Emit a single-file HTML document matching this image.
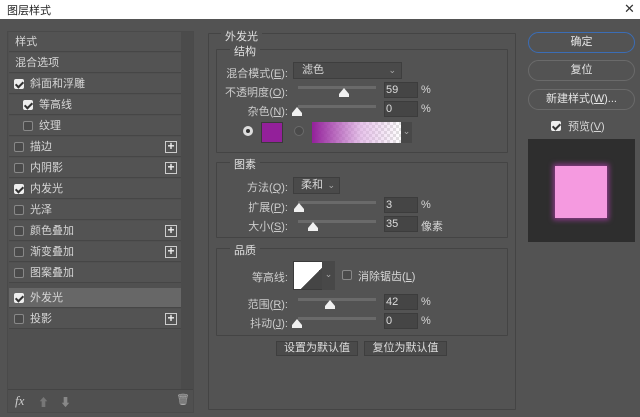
<!DOCTYPE html>
<html><head><meta charset="utf-8"><style>
*{box-sizing:border-box;margin:0;padding:0}
body{width:640px;height:417px;background:#535353;position:relative;overflow:hidden;font-family:"Liberation Sans","Noto Sans CJK SC",sans-serif;font-size:11px;color:#d6d6d6}
.a{position:absolute}
.title{left:0;top:0;width:640px;height:19px;background:#fff;color:#222;font-size:11px}
.lp{left:7px;top:31px;width:187px;height:382px;border:1px solid #4a4a4a;background:#505050}
.row{position:absolute;left:1px;width:172px;height:20px;border-bottom:1px solid #464646;background:#535353;line-height:20px}
.cb{position:absolute;width:10px;height:10px;border:1px solid #888;border-radius:2px;background:#4a4a4a}
.cb.on{background:#eee;border-color:#eee}
.cb.on::after{content:"";position:absolute;left:2px;top:0px;width:3px;height:6px;border:solid #333;border-width:0 2px 2px 0;transform:rotate(45deg)}
.plus{position:absolute;right:4px;top:4px;width:12px;height:12px;border:1px solid #ccc;color:#eee;font-size:12px;line-height:9px;text-align:center;font-weight:bold}
.box{border:1px solid #444;border-radius:1px}
.leg{position:absolute;background:#535353;padding:0 4px;color:#e0e0e0}
.lbl{position:absolute;text-align:right;width:110px;color:#ccc}
.slider{position:absolute;height:3px;background:#6a6a6a;width:78px}
.thumb{position:absolute;width:0;height:0;border-left:5px solid transparent;border-right:5px solid transparent;border-bottom:6px solid #f0f0f0}
.thumb::after{content:"";position:absolute;left:-5px;top:6px;width:10px;height:3px;background:#f0f0f0}
.inp{position:absolute;width:34px;height:16px;background:#454545;border:1px solid #3c3c3c;padding-left:1px;line-height:14px;color:#ddd}
.btn{position:absolute;border:1px solid #6a6a6a;border-radius:11px;text-align:center;color:#e6e6e6;line-height:19px;height:21px}
.sb{position:absolute;height:15px;background:#4a4a4a;border:1px solid #3e3e3e;text-align:center;line-height:13px;color:#ddd}
</style></head><body>
<div class="a title"><span class="a" style="left:7px;top:2px">图层样式</span><span class="a" style="left:624px;top:1px;font-size:13px;color:#333">✕</span></div>

<div class="a lp">
<div class="a" style="left:173px;top:0;width:12px;height:357px;background:#4b4b4b"></div>
<div class="row" style="top:0">&nbsp;&nbsp;样式</div>
<div class="row" style="top:21px">&nbsp;&nbsp;混合选项</div>
<div class="row" style="top:42px"><span class="cb on" style="left:5px;top:5px"></span><span style="margin-left:21px">斜面和浮雕</span></div>
<div class="row" style="top:63px"><span class="cb on" style="left:14px;top:5px"></span><span style="margin-left:30px">等高线</span></div>
<div class="row" style="top:84px"><span class="cb" style="left:14px;top:5px"></span><span style="margin-left:30px">纹理</span></div>
<div class="row" style="top:105px"><span class="cb" style="left:5px;top:5px"></span><span style="margin-left:21px">描边</span><span class="plus">+</span></div>
<div class="row" style="top:126px"><span class="cb" style="left:5px;top:5px"></span><span style="margin-left:21px">内阴影</span><span class="plus">+</span></div>
<div class="row" style="top:147px"><span class="cb on" style="left:5px;top:5px"></span><span style="margin-left:21px">内发光</span></div>
<div class="row" style="top:168px"><span class="cb" style="left:5px;top:5px"></span><span style="margin-left:21px">光泽</span></div>
<div class="row" style="top:189px"><span class="cb" style="left:5px;top:5px"></span><span style="margin-left:21px">颜色叠加</span><span class="plus">+</span></div>
<div class="row" style="top:210px"><span class="cb" style="left:5px;top:5px"></span><span style="margin-left:21px">渐变叠加</span><span class="plus">+</span></div>
<div class="row" style="top:231px"><span class="cb" style="left:5px;top:5px"></span><span style="margin-left:21px">图案叠加</span></div>
<div class="row" style="top:256px;background:#676767"><span class="cb on" style="left:5px;top:5px"></span><span style="margin-left:21px">外发光</span></div>
<div class="row" style="top:277px"><span class="cb" style="left:5px;top:5px"></span><span style="margin-left:21px">投影</span><span class="plus">+</span></div>
<div class="a" style="left:0;top:357px;width:185px;height:1px;background:#444"></div>
<span class="a" style="left:7px;top:361px;font-style:italic;font-family:'Liberation Serif',serif;font-size:13px;color:#ccc">fx</span>
<span class="a" style="left:30px;top:362px;color:#777">⬆</span>
<span class="a" style="left:52px;top:362px;color:#888">⬇</span>
<span class="a" style="left:168px;top:361px;color:#aaa">🗑</span>
</div>

<div class="a box" style="left:208px;top:33px;width:308px;height:377px"></div>
<span class="leg" style="left:221px;top:28px">外发光</span>
<div class="a box" style="left:216px;top:49px;width:292px;height:104px"></div>
<span class="leg" style="left:230px;top:43px">结构</span>
<span class="lbl" style="left:178px;top:65px">混合模式(<u>E</u>):</span>
<div class="a" style="left:293px;top:62px;width:109px;height:17px;background:#4a4a4a;border:1px solid #3e3e3e;padding-left:8px;line-height:15px">滤色<span class="a" style="right:5px;top:0;color:#aaa;font-size:9px">⌄</span></div>
<span class="lbl" style="left:178px;top:84px">不透明度(<u>O</u>):</span>
<div class="slider" style="left:298px;top:86px"></div><div class="thumb" style="left:339px;top:88px"></div>
<div class="inp" style="left:384px;top:82px">59</div><span class="a" style="left:421px;top:84px">%</span>
<span class="lbl" style="left:178px;top:103px">杂色(<u>N</u>):</span>
<div class="slider" style="left:298px;top:105px"></div><div class="thumb" style="left:292px;top:107px"></div>
<div class="inp" style="left:384px;top:101px">0</div><span class="a" style="left:421px;top:103px">%</span>
<div class="a" style="left:243px;top:126px;width:10px;height:10px;border-radius:50%;background:#ddd"><div class="a" style="left:3px;top:3px;width:4px;height:4px;border-radius:50%;background:#333"></div></div>
<div class="a" style="left:261px;top:122px;width:22px;height:21px;background:#93209a;border:1px solid #3a3a3a"></div>
<div class="a" style="left:294px;top:126px;width:10px;height:10px;border-radius:50%;border:1px solid #6a6a6a;background:#4a4a4a"></div>
<div class="a" style="left:312px;top:122px;width:89px;height:21px;background:linear-gradient(90deg,#93209a,rgba(220,170,225,.7) 55%,rgba(255,255,255,.1)),repeating-conic-gradient(#ddd 0 25%,#fff 0 50%) 0 0/6px 6px"></div>
<div class="a" style="left:401px;top:122px;width:11px;height:21px;background:#484848;color:#aaa;font-size:9px;text-align:center;line-height:18px">⌄</div>

<div class="a box" style="left:216px;top:162px;width:292px;height:76px"></div>
<span class="leg" style="left:230px;top:156px">图素</span>
<span class="lbl" style="left:178px;top:179px">方法(<u>Q</u>):</span>
<div class="a" style="left:293px;top:177px;width:47px;height:17px;background:#4a4a4a;border:1px solid #3e3e3e;padding-left:7px;line-height:15px">柔和<span class="a" style="right:4px;top:0;color:#aaa;font-size:9px">⌄</span></div>
<span class="lbl" style="left:178px;top:199px">扩展(<u>P</u>):</span>
<div class="slider" style="left:298px;top:201px"></div><div class="thumb" style="left:294px;top:203px"></div>
<div class="inp" style="left:384px;top:197px">3</div><span class="a" style="left:421px;top:199px">%</span>
<span class="lbl" style="left:178px;top:218px">大小(<u>S</u>):</span>
<div class="slider" style="left:298px;top:220px"></div><div class="thumb" style="left:308px;top:222px"></div>
<div class="inp" style="left:384px;top:216px">35</div><span class="a" style="left:421px;top:218px">像素</span>

<div class="a box" style="left:216px;top:248px;width:292px;height:88px"></div>
<span class="leg" style="left:230px;top:242px">品质</span>
<span class="lbl" style="left:178px;top:269px">等高线:</span>
<div class="a" style="left:293px;top:261px;width:42px;height:29px;border:1px solid #3a3a3a;background:linear-gradient(135deg,#fff 50%,#454545 50%)"></div>
<div class="a" style="left:322px;top:261px;width:13px;height:29px;background:#484848;color:#aaa;font-size:9px;text-align:center;line-height:26px">⌄</div>
<span class="cb" style="left:342px;top:270px"></span>
<span class="a" style="left:358px;top:268px">消除锯齿(<u>L</u>)</span>
<span class="lbl" style="left:178px;top:296px">范围(<u>R</u>):</span>
<div class="slider" style="left:298px;top:298px"></div><div class="thumb" style="left:325px;top:300px"></div>
<div class="inp" style="left:384px;top:294px">42</div><span class="a" style="left:421px;top:296px">%</span>
<span class="lbl" style="left:178px;top:315px">抖动(<u>J</u>):</span>
<div class="slider" style="left:298px;top:317px"></div><div class="thumb" style="left:292px;top:319px"></div>
<div class="inp" style="left:384px;top:313px">0</div><span class="a" style="left:421px;top:315px">%</span>
<div class="sb" style="left:276px;top:341px;width:82px">设置为默认值</div>
<div class="sb" style="left:364px;top:341px;width:83px">复位为默认值</div>

<div class="btn" style="left:528px;top:32px;width:107px;border-color:#3b6db5">确定</div>
<div class="btn" style="left:528px;top:60px;width:107px">复位</div>
<div class="btn" style="left:528px;top:89px;width:107px">新建样式(<u>W</u>)...</div>
<span class="cb on" style="left:551px;top:121px"></span>
<span class="a" style="left:568px;top:118px">预览(<u>V</u>)</span>
<div class="a" style="left:528px;top:139px;width:107px;height:103px;background:#2e2e2e"></div>
<div class="a" style="left:555px;top:166px;width:52px;height:52px;background:#f59ae0;box-shadow:0 0 5px 2px #8a3a88"></div>
</body></html>
